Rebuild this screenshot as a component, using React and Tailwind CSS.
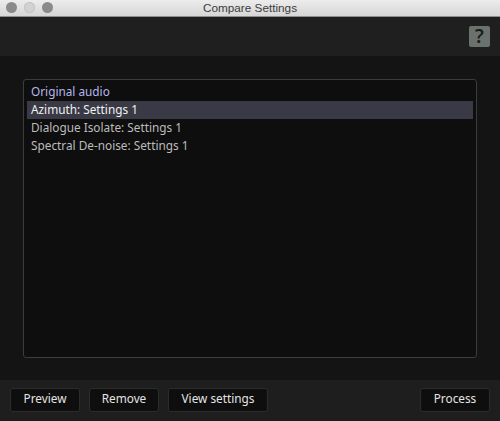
const items = [
  { label: "Azimuth: Settings 1", selected: true },
  { label: "Dialogue Isolate: Settings 1" },
  { label: "Spectral De-noise: Settings 1" },
];

function ActionButton({ label, width }) {
  return (
    <button className={`h-[24px] ${width} rounded-[3px] border border-[#2c2c2c] bg-[#0e0e0e] pb-[3px] text-[11.8px] leading-none text-[#e4e4e4]`}>
      {label}
    </button>
  );
}

export default function App() {
  return (
    <div className="flex h-[421px] w-[500px] flex-col overflow-hidden bg-[#141414] font-['Noto_Sans',sans-serif]">
      {/* Title bar */}
      <div className="relative flex h-[17px] shrink-0 items-center justify-center border-b border-[#8e8e8e] bg-gradient-to-b from-[#ececec] to-[#d6d6d6]">
        <div className="absolute left-[6px] top-[2px] flex gap-[7px]">
          <span className="h-[11px] w-[11px] rounded-full bg-[#8a8a8c]" />
          <span className="h-[11px] w-[11px] rounded-full bg-[#d2d2d2] ring-1 ring-inset ring-[#c4c4c4]" />
          <span className="h-[11px] w-[11px] rounded-full bg-[#8a8a8c]" />
        </div>
        <span className="font-['Liberation_Sans',sans-serif] text-[11.75px] leading-none text-[#3c3c3c]">Compare Settings</span>
      </div>

      {/* Help strip */}
      <div className="flex h-[39px] shrink-0 items-start justify-end bg-[#1f1f1f] pr-[10px] pt-[9px]">
        <div className="flex h-[21px] w-[21px] items-center justify-center rounded-[2px] bg-[#6b716c] text-[19px] font-semibold leading-none text-[#1c1c1c]">
          ?
        </div>
      </div>

      {/* List */}
      <div className="flex-1 px-[23px] pb-[22px] pt-[23px]">
        <div className="h-full rounded-[3px] border border-[#3c3c3c] bg-[#0e0e0e] px-[3px] pt-[3px] text-[11.8px] leading-[17px] text-[#bcbcbc]">
          <div className="h-[18px] pl-[4px] text-[#b6b6ec]">Original audio</div>
          {items.map((item) => (
            <div
              key={item.label}
              className={item.selected ? "h-[18px] bg-[#393a46] pl-[4px] text-[#f0f0f0]" : "h-[18px] pl-[4px]"}
            >
              {item.label}
            </div>
          ))}
        </div>
      </div>

      {/* Footer actions */}
      <div className="flex h-[41px] shrink-0 items-start gap-[9px] bg-[#1e1e1e] px-[10px] pt-[8px]">
        <ActionButton label="Preview" width="w-[70px]" />
        <ActionButton label="Remove" width="w-[70px]" />
        <ActionButton label="View settings" width="w-[100px]" />
        <div className="ml-auto flex">
          <ActionButton label="Process" width="w-[70px]" />
        </div>
      </div>
    </div>
  );
}
